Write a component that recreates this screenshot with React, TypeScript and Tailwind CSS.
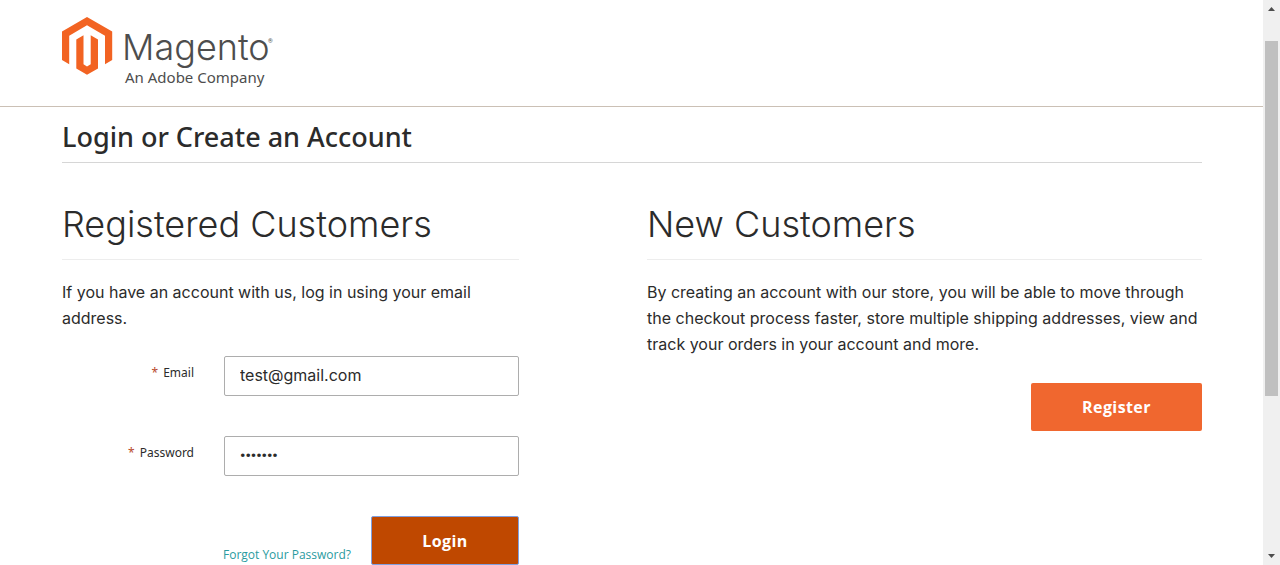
import type { ReactNode } from 'react';

function Logo() {
  return (
    <a href="#" aria-label="Magento" className="block w-[212px]">
      <svg viewBox="0 0 212 72" className="block h-[72px] w-[212px]">
        <path
          fill="#f26322"
          d="M25 0 L50.200 14.500 V43 L43 47.200 V18.700 L25 8.300 L7.200 18.700 V47.200 L0 43 V14.500 Z"
        />
        <path
          fill="#f26322"
          d="M21.500 18.300 V47.300 L25 49.500 L28.700 47.300 V18.300 L36 22.500 V51.400 L25 57.800 L14.300 51.400 V22.500 Z"
        />
        <text x="60" y="43" fill="#4d4d4d" className="font-['Inter',sans-serif] text-[36px] font-light">
          Magento
        </text>
        <text x="206" y="26" fill="#4d4d4d" className="font-['Roboto',sans-serif] text-[6px]">
          ®
        </text>
        <text x="63" y="66" fill="#4d4d4d" className="font-['Noto_Sans',sans-serif] text-[15px]">
          An Adobe Company
        </text>
      </svg>
    </a>
  );
}

function SectionTitle({ children }: { children: ReactNode }) {
  return (
    <h2 className="border-b border-[#ededed] pb-3 font-['Inter',sans-serif] text-[36px] leading-[46px] font-light">
      {children}
    </h2>
  );
}

type FieldProps = { id: string; label: string; type: string; value: string };

function Field({ id, label, type, value }: FieldProps) {
  return (
    <div className="flex justify-between">
      <label htmlFor={id} className="w-[132px] pt-[9px] text-right text-xs leading-4">
        <span className="mr-[5px] text-[#b8492c]">*</span>
        {label}
      </label>
      <input
        id={id}
        type={type}
        defaultValue={value}
        className={
          type === 'password'
            ? "h-10 w-[295px] rounded-xs border border-[#adadad] px-[15px] font-['Roboto',sans-serif] text-[15px] font-bold outline-none"
            : "h-10 w-[295px] rounded-xs border border-[#adadad] px-[15px] pb-[2px] font-['Inter',sans-serif] text-base outline-none"
        }
      />
    </div>
  );
}

function Scrollbar() {
  return (
    <div aria-hidden="true" className="flex w-[17px] shrink-0 flex-col items-center bg-[#f0f0f0]">
      <svg viewBox="0 0 17 41" className="h-[41px] w-[17px]">
        <path d="M5 11 L8.500 7 L12 11 Z" fill="#4d4d4d" />
      </svg>
      <div className="w-[13px] grow-[355] bg-[#c0c0c0]" />
      <div className="grow-[152]" />
      <svg viewBox="0 0 17 17" className="h-[17px] w-[17px]">
        <path d="M5 6 L8.500 10 L12 6 Z" fill="#4d4d4d" />
      </svg>
    </div>
  );
}

export default function App() {
  return (
    <div className="flex h-screen overflow-hidden bg-white font-['Noto_Sans',sans-serif] text-[#2b2b2b]">
      <div className="min-w-0 grow overflow-hidden">
        <header className="border-b border-[#cbc0b5] px-[62px] pt-[17px] pb-[17px]">
          <Logo />
        </header>
        <main className="pr-[61px] pl-[62px]">
          <h1 className="border-b border-[#d6d6d6] pt-3 pb-[7px] text-[27px] leading-9 font-medium">
            Login or Create an Account
          </h1>
          <div className="flex justify-between pt-[38px]">
            <section className="w-[457px]">
              <SectionTitle>Registered Customers</SectionTitle>
              <p className="pt-[19px] font-['Inter',sans-serif] text-base leading-[26px]">
                If you have an account with us, log in using your email address.
              </p>
              <form className="flex flex-col gap-10 pt-[25px]" onSubmit={(e) => e.preventDefault()}>
                <Field id="email" label="Email" type="email" value="test@gmail.com" />
                <Field id="password" label="Password" type="password" value="secret1" />
                <div className="flex items-end justify-end gap-5">
                  <a href="#" className="pb-[2px] font-['Open_Sans',sans-serif] text-xs leading-4 text-[#2a9ba0]">
                    Forgot Your Password?
                  </a>
                  <button
                    type="submit"
                    className="h-[49px] w-[148px] rounded-xs border border-[#7f9fe0] bg-[#bf4800] font-['Open_Sans',sans-serif] text-base font-bold tracking-wide text-white"
                  >
                    Login
                  </button>
                </div>
              </form>
            </section>
            <section className="w-[555px]">
              <SectionTitle>New Customers</SectionTitle>
              <p className="pt-[19px] font-['Inter',sans-serif] text-base leading-[26px]">
                By creating an account with our store, you will be able to move through the checkout process
                faster, store multiple shipping addresses, view and track your orders in your account and more.
              </p>
              <div className="flex justify-end pt-[26px]">
                <button
                  type="button"
                  className="h-12 w-[171px] rounded-xs bg-[#f0672f] font-['Open_Sans',sans-serif] text-base font-bold tracking-wide text-white"
                >
                  Register
                </button>
              </div>
            </section>
          </div>
        </main>
      </div>
      <Scrollbar />
    </div>
  );
}
